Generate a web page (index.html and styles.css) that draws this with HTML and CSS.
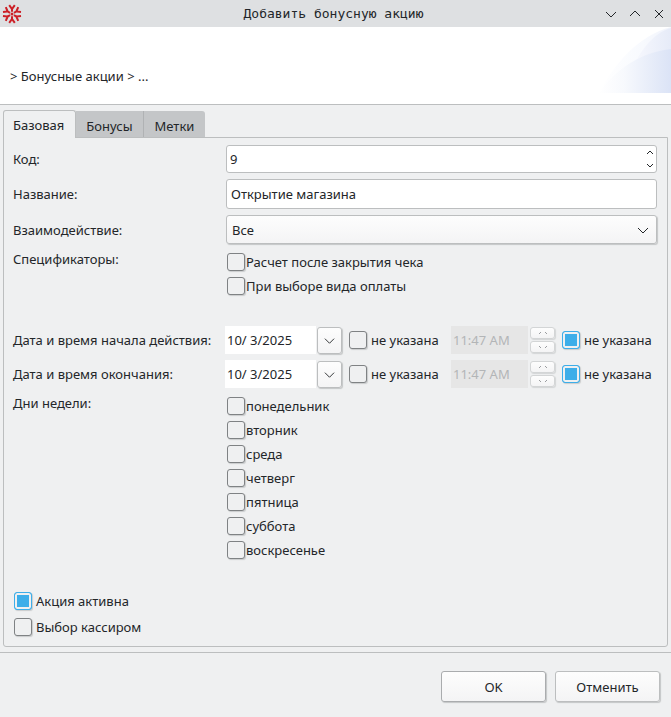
FILE: index.html
```html
<!DOCTYPE html>
<html lang="ru">
<head>
<meta charset="utf-8">
<title>Добавить бонусную акцию</title>
<link rel="stylesheet" href="styles.css">
</head>
<body>
<header class="titlebar">
  <svg class="logo" viewBox="0 0 20 20" aria-hidden="true">
    <defs><path id="ray" d="M10 7.8V4.8M7.2 1.2L10 5L12.8 1.2"/></defs>
    <g fill="none" stroke="#cc2027" stroke-width="2">
      <use href="#ray"/><use href="#ray" transform="rotate(60 10 10)"/><use href="#ray" transform="rotate(120 10 10)"/><use href="#ray" transform="rotate(180 10 10)"/><use href="#ray" transform="rotate(240 10 10)"/><use href="#ray" transform="rotate(300 10 10)"/>
    </g>
    <circle cx="10" cy="10" r="1.5" fill="#cc2027"/>
  </svg>
  <h1 class="title">Добавить бонусную акцию</h1>
  <div class="window-buttons">
    <button class="window-button" aria-label="Свернуть"><svg viewBox="0 0 12 12"><path d="M1 4L6 9L11 4"/></svg></button>
    <button class="window-button" aria-label="Развернуть"><svg viewBox="0 0 12 12"><path d="M1 8L6 3L11 8"/></svg></button>
    <button class="window-button" aria-label="Закрыть"><svg viewBox="0 0 12 12"><path d="M2 2L10 10M10 2L2 10"/></svg></button>
  </div>
</header>
<div class="banner">
  <nav class="crumbs">&gt; Бонусные акции &gt; ...</nav>
  <svg class="swoosh" viewBox="0 0 72 66" aria-hidden="true">
    <defs>
      <linearGradient id="g1"><stop offset="0" stop-color="#fff"/><stop offset=".6" stop-color="#f8fafe"/><stop offset="1" stop-color="#f1f4fc"/></linearGradient>
      <linearGradient id="g2"><stop offset="0" stop-color="#f8f9fe"/><stop offset="1" stop-color="#e6ebf8"/></linearGradient>
      <linearGradient id="g3"><stop offset="0" stop-color="#fff"/><stop offset=".35" stop-color="#f7f9fd"/><stop offset="1" stop-color="#dbe3f6"/></linearGradient>
    </defs>
    <path fill="url(#g1)" d="M0 66C14 38 40 8 72 0V66Z"/>
    <path fill="url(#g2)" d="M33 42C41 24 54 6 72 1V42Z"/>
    <path fill="url(#g3)" d="M0 66C18 40 44 25 72 22V66Z"/>
  </svg>
</div>
<main class="content">
  <div class="tabs" role="tablist">
    <button class="tab active" role="tab" aria-selected="true">Базовая</button>
    <button class="tab" role="tab">Бонусы</button>
    <button class="tab" role="tab">Метки</button>
  </div>
  <form class="panel" id="promo">
    <div class="row">
      <label class="label" for="code">Код:</label>
      <div class="spinbox">
        <input id="code" type="text" value="9">
        <div class="spin-arrows">
          <button type="button" aria-label="Больше"><svg viewBox="0 0 8 5"><path d="M1 4L4 1L7 4"/></svg></button>
          <button type="button" aria-label="Меньше"><svg viewBox="0 0 8 5"><path d="M1 1L4 4L7 1"/></svg></button>
        </div>
      </div>
    </div>
    <div class="row">
      <label class="label" for="name">Название:</label>
      <input class="textbox" id="name" type="text" value="Открытие магазина">
    </div>
    <div class="row">
      <label class="label" for="interaction">Взаимодействие:</label>
      <div class="combo">
        <select id="interaction"><option>Все</option></select>
        <svg viewBox="0 0 12 12"><path d="M1 4L6 9L11 4"/></svg>
      </div>
    </div>
    <div class="row group" role="group" aria-labelledby="specs">
      <span class="label" id="specs">Спецификаторы:</span>
      <div class="checks">
        <label><input type="checkbox">Расчет после закрытия чека</label>
        <label><input type="checkbox">При выборе вида оплаты</label>
      </div>
    </div>
    <div class="row period first">
      <label class="label" for="start">Дата и время начала действия:</label>
      <div class="moment">
        <input class="date" id="start" type="text" value="10/ 3/2025">
        <button class="drop" type="button" aria-label="Календарь"><svg viewBox="0 0 12 12"><path d="M1 4L6 9L11 4"/></svg></button>
        <label class="unset"><input type="checkbox">не указана</label>
        <input class="time" type="text" value="11:47 AM" aria-label="Время начала" disabled>
        <div class="stepper">
          <button type="button" aria-label="Больше" disabled><svg viewBox="0 0 12 4"><path d="M2 3L4 1M8 1L10 3"/></svg></button>
          <button type="button" aria-label="Меньше" disabled><svg viewBox="0 0 12 4"><path d="M2 1L4 3M8 3L10 1"/></svg></button>
        </div>
        <label class="unset"><input type="checkbox" checked>не указана</label>
      </div>
    </div>
    <div class="row period">
      <label class="label" for="end">Дата и время окончания:</label>
      <div class="moment">
        <input class="date" id="end" type="text" value="10/ 3/2025">
        <button class="drop" type="button" aria-label="Календарь"><svg viewBox="0 0 12 12"><path d="M1 4L6 9L11 4"/></svg></button>
        <label class="unset"><input type="checkbox">не указана</label>
        <input class="time" type="text" value="11:47 AM" aria-label="Время окончания" disabled>
        <div class="stepper">
          <button type="button" aria-label="Больше" disabled><svg viewBox="0 0 12 4"><path d="M2 3L4 1M8 1L10 3"/></svg></button>
          <button type="button" aria-label="Меньше" disabled><svg viewBox="0 0 12 4"><path d="M2 1L4 3M8 3L10 1"/></svg></button>
        </div>
        <label class="unset"><input type="checkbox" checked>не указана</label>
      </div>
    </div>
    <div class="row group" role="group" aria-labelledby="days">
      <span class="label" id="days">Дни недели:</span>
      <div class="checks">
        <label><input type="checkbox">понедельник</label>
        <label><input type="checkbox">вторник</label>
        <label><input type="checkbox">среда</label>
        <label><input type="checkbox">четверг</label>
        <label><input type="checkbox">пятница</label>
        <label><input type="checkbox">суббота</label>
        <label><input type="checkbox">воскресенье</label>
      </div>
    </div>
    <div class="flags">
      <label class="unset"><input type="checkbox" checked>Акция активна</label>
      <label class="unset"><input type="checkbox">Выбор кассиром</label>
    </div>
  </form>
</main>
<footer class="actions">
  <button class="action default" form="promo">OK</button>
  <button class="action" type="button">Отменить</button>
</footer>
</body>
</html>
```
FILE: styles.css
```css
* { box-sizing: border-box; }
body {
  margin: 0;
  min-height: 100vh;
  background: #eff0f1;
  color: #232629;
  font: 13px/18px "Noto Sans", sans-serif;
}
button, input, select { font: inherit; color: inherit; margin: 0; }
svg { display: block; fill: none; stroke: #232629; }

.titlebar {
  display: grid;
  grid-template-columns: 1fr auto 1fr;
  align-items: center;
  height: 27px;
  padding: 0 6px 0 2px;
  background: #dee0e2;
}
.logo { width: 20px; height: 20px; stroke: none; }
.title { margin: 0; font: 13px/18px "DejaVu Sans Mono", monospace; }
.window-buttons { display: flex; justify-content: flex-end; gap: 12px; }
.window-button { width: 12px; height: 12px; padding: 0; border: 0; background: none; }

.banner {
  display: flex;
  justify-content: space-between;
  height: 78px;
  background: #fff;
  border-bottom: 1px solid #bcbebf;
}
.crumbs { padding: 40px 0 0 10px; }
.swoosh { width: 72px; height: 66px; stroke: none; }

.content { padding: 5px 3px; border-bottom: 1px solid #bcbebf; }
.tabs { display: flex; align-items: flex-end; height: 28px; }
.tab {
  height: 26px;
  margin-bottom: 1px;
  padding: 3px 10px 0;
  border: 0;
  border-right: 1px solid #b0b2b4;
  background: #c4c6c8;
}
.tab:last-child { border-right: 0; border-radius: 0 3px 0 0; padding: 3px 11px 0; }
.tab.active {
  height: 28px;
  margin-bottom: 0;
  padding: 0 11px 0 9px;
  border: 1px solid #bcbebf;
  border-bottom: 0;
  border-radius: 3px 3px 0 0;
  background: #eff0f1;
  position: relative;
}
.panel {
  display: flex;
  flex-direction: column;
  gap: 6px;
  margin-top: -1px;
  padding: 7px 10px 10px 9px;
  border: 1px solid #bcbebf;
  border-radius: 0 0 3px 3px;
}
.row { display: grid; grid-template-columns: 207px 1fr; gap: 6px; align-items: center; }
.label { white-space: nowrap; }
.spinbox, .textbox, .combo {
  width: 100%;
  height: 30px;
  border: 1px solid #bcbebf;
  border-radius: 3px;
  background: #fff;
}
.textbox { padding: 0 4px; }
.spinbox { display: flex; height: 28px; }
.spinbox input { flex: 1; min-width: 0; padding: 0 3px; border: 0; background: none; }
.spin-arrows { display: flex; flex-direction: column; justify-content: space-between; padding: 4px 2px; }
.spin-arrows button { padding: 0; border: 0; background: none; }
.spin-arrows svg { width: 8px; height: 5px; }
.combo {
  display: grid;
  align-items: center;
  height: 29px;
  background: linear-gradient(#fdfdfd, #f4f4f5);
  box-shadow: 1px 1px 1px #c4c6c7;
}
.combo select { grid-area: 1 / 1; width: 100%; height: 27px; padding: 0 5px; border: 0; background: none; appearance: none; }
.combo svg { grid-area: 1 / 1; justify-self: end; width: 12px; height: 12px; margin-right: 7px; pointer-events: none; }

input[type="checkbox"] {
  appearance: none;
  width: 18px;
  height: 18px;
  flex: none;
  border: 1px solid #7f8284;
  border-radius: 3px;
  background: #eff0f1;
  box-shadow: 1px 1px 1px #c9cbcc;
}
input[type="checkbox"]:checked {
  border-color: #3daee9;
  background: #3daee9;
  box-shadow: inset 0 0 0 2px #eff0f1, 1px 1px 1px #c9cbcc;
}
.group { align-items: start; }
.checks { display: flex; flex-direction: column; padding-left: 1px; }
.checks label { display: flex; align-items: center; gap: 1px; height: 24px; }
.period { gap: 5px; }
.first { margin-top: 22px; }
.moment { display: flex; align-items: center; height: 28px; }
.date, .time { height: 28px; padding: 0 2px; border: 0; background: #fff; }
.date { width: 91px; flex: 1; min-width: 0; }
.time { width: 77px; margin-left: 6px; background: #e6e6e6; color: #b3b5b7; }
.drop, .stepper button, .action {
  border: 1px solid #bcbebf;
  border-radius: 3px;
  background: linear-gradient(#fdfdfd, #f4f4f5);
  box-shadow: 1px 1px 1px #c4c6c7;
}
.drop { width: 25px; height: 27px; margin: 0 7px 0 1px; padding: 0 6px; }
.stepper { display: flex; flex-direction: column; gap: 2px; margin: 0 7px 0 2px; }
.stepper button { width: 25px; height: 12px; padding: 0 6px; border-color: #d3d5d6; box-shadow: 1px 1px 1px #d3d5d6; }
.stepper svg { width: 12px; height: 4px; stroke: #9b9da0; }
.unset { display: flex; align-items: center; gap: 4px; white-space: nowrap; }
.moment .unset { min-width: 96px; }
.flags { display: flex; flex-direction: column; gap: 8px; padding: 24px 0 0 1px; }

.actions { display: flex; justify-content: flex-end; gap: 9px; padding: 18px 11px 0; }
.action { width: 105px; height: 31px; }
.action.default { border-color: #aaacae; }
```
